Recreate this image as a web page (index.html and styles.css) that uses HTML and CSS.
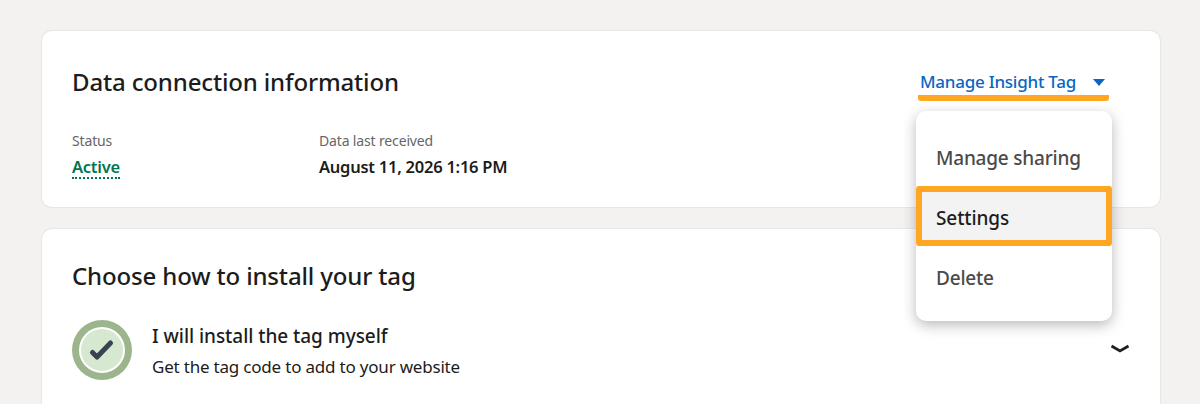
FILE: index.html
```html
<!DOCTYPE html>
<html>
<head>
<meta charset="UTF-8">
<title>Data connection information</title>
<link rel="stylesheet" href="styles.css">
</head>
<body>
	<div class="card info">
		<div class="card-head">
			<h2 class="title">Data connection information</h2>
			<div class="manage">
				<div class="manage-btn">Manage Insight Tag<span class="caret"></span></div>
				<ul class="menu">
					<li>Manage sharing</li>
					<li class="current">Settings</li>
					<li>Delete</li>
				</ul>
			</div>
		</div>
		<div class="stats">
			<div class="stat status">
				<p class="label">Status</p>
				<p class="value active"><span>Active</span></p>
			</div>
			<div class="stat">
				<p class="label">Data last received</p>
				<p class="value">August 11, 2026 1:16 PM</p>
			</div>
		</div>
	</div>
	<div class="card install">
		<h2 class="title">Choose how to install your tag</h2>
		<div class="option">
			<div class="check">
				<svg width="30" height="30" viewBox="0 0 30 30"><path d="M5.500 17.500l4.500 4.500 13.500-14" fill="none" stroke="#38434f" stroke-width="5" stroke-linecap="round" stroke-linejoin="round"/></svg>
			</div>
			<div class="option-text">
				<p class="option-title">I will install the tag myself</p>
				<p class="option-sub">Get the tag code to add to your website</p>
			</div>
			<svg class="chevron" width="20" height="12" viewBox="0 0 20 12"><path d="M1.500 2l8.500 5 8.500-5" fill="none" stroke="#1f1f1f" stroke-width="2.800"/></svg>
		</div>
	</div>
</body>
</html>
```

FILE: styles.css
```css
html,body{
	height:100%;
	overflow:hidden;
}
body{
	margin:0;
	padding:31px 40px 0 42px;
	box-sizing:border-box;
	background:#f3f2f0;
	font-family:"Noto Sans","Open Sans",sans-serif;
	color:#1c1c1c;
}
p,h2,ul{
	margin:0;
	padding:0;
}
.card{
	background:#fff;
	border-radius:10px;
	box-shadow:0 0 0 1px #e9e7e4;
	padding:0 30px;
}
.info{
	height:176px;
	box-sizing:border-box;
	margin-bottom:22px;
}
.card-head{
	display:flex;
	justify-content:space-between;
	padding-top:34px;
}
.title{
	font-size:24px;
	line-height:34px;
	font-weight:500;
	letter-spacing:-0.15px;
}
.manage{
	position:relative;
	width:191px;
	margin-right:21px;
}
.manage-btn{
	box-sizing:border-box;
	height:36px;
	padding:4px 0 0 2px;
	font-size:17px;
	line-height:26px;
	font-weight:500;
	letter-spacing:-0.25px;
	color:#0a66c2;
	border-bottom:6px solid #ffa622;
	border-radius:0 0 3px 3px;
	white-space:nowrap;
}
.caret{
	display:inline-block;
	margin-left:17px;
	vertical-align:2px;
	border-left:6.500px solid transparent;
	border-right:6.500px solid transparent;
	border-top:7px solid #0a66c2;
}
.menu{
	position:absolute;
	top:46px;
	left:-2px;
	width:196px;
	height:210px;
	box-sizing:border-box;
	padding-top:15px;
	list-style:none;
	background:#fff;
	border-radius:10px;
	box-shadow:0 4px 14px rgba(0,0,0,0.28);
}
.menu li{
	box-sizing:border-box;
	height:60px;
	padding-left:20px;
	font-size:19px;
	line-height:64px;
	font-weight:500;
	letter-spacing:-0.2px;
	color:#4a4a4a;
}
.menu li.current{
	background:#f3f3f3;
	color:#1c1c1c;
	line-height:52px;
	padding-left:14px;
	border:6px solid #ffa622;
	border-radius:3px;
	letter-spacing:-0.1px;
}
.stats{
	display:flex;
	padding-top:30px;
}
.status{
	width:247px;
}
.label{
	font-size:14px;
	line-height:20px;
	letter-spacing:-0.15px;
	color:#666;
}
.value{
	margin-top:4px;
	font-size:16.500px;
	line-height:24px;
	font-weight:600;
	letter-spacing:-0.25px;
}
.active{
	color:#01754f;
}
.active span{
	display:inline-block;
	line-height:21px;
	border-bottom:2px dotted #01754f;
}
.install{
	height:175px;
	padding-top:30px;
	box-sizing:border-box;
	border-radius:10px 10px 0 0;
}
.option{
	display:flex;
	align-items:center;
	margin-top:25px;
}
.check{
	width:46px;
	height:46px;
	margin:0 7px;
	box-sizing:border-box;
	display:flex;
	align-items:center;
	justify-content:center;
	background:#d6e8cf;
	border:2px solid #fff;
	border-radius:50%;
	box-shadow:0 0 0 7px #9cb58d;
}
.option-text{
	flex:1;
	margin:3px 0 0 20px;
}
.option-title{
	font-size:19px;
	line-height:30px;
	font-weight:500;
	letter-spacing:-0.05px;
}
.option-sub{
	font-size:17px;
	line-height:30px;
	letter-spacing:-0.2px;
	padding-top:1px;
}
.chevron{
	margin-right:0;
}
```
